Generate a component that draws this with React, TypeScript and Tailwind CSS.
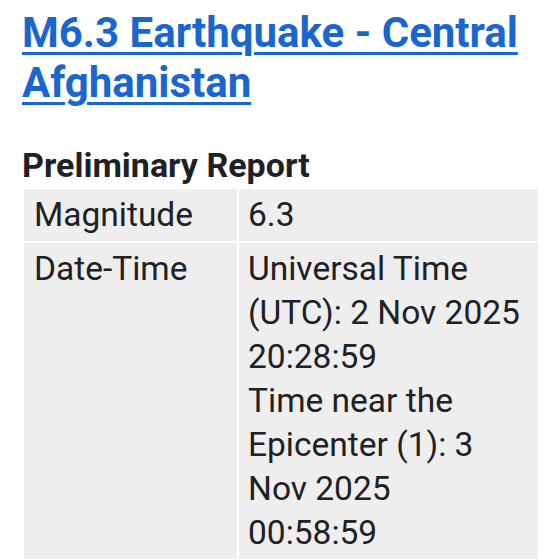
import React from "react";

const ROWS = [
  { label: "Magnitude", value: ["6.3"] },
  {
    label: "Date-Time",
    value: [
      "Universal Time (UTC): 2 Nov 2025 20:28:59",
      "Time near the Epicenter (1): 3 Nov 2025 00:58:59",
    ],
  },
];

const App: React.FC = () => {
  return (
    <div className="min-h-screen bg-white px-[22px] pt-[8px] font-['Roboto',sans-serif]">
      {/* Title */}
      <h1 className="text-[42px] leading-[50px] font-bold text-[#1a66d0]">
        <a href="#" className="underline decoration-[3px] underline-offset-[5px]">
          M6.3 Earthquake - Central Afghanistan
        </a>
      </h1>

      <h2 className="mt-[37px] text-[34px] leading-[40px] font-bold text-[#202124]">
        Preliminary Report
      </h2>

      {/* Report table */}
      <div className="mt-[2px] grid grid-cols-[213px_1fr] gap-[2px] p-[2px] pr-0 text-[33.5px] leading-[44px] text-[#202124]">
        {ROWS.map((row) => (
          <React.Fragment key={row.label}>
            <div className="bg-[#eeeeee] px-[10px] py-[4px]">{row.label}</div>
            <div className="bg-[#eeeeee] pl-[9px] pr-[14px] py-[4px]">
              {row.value.map((line) => (
                <div key={line}>{line}</div>
              ))}
            </div>
          </React.Fragment>
        ))}
      </div>
    </div>
  );
};

export default App;
